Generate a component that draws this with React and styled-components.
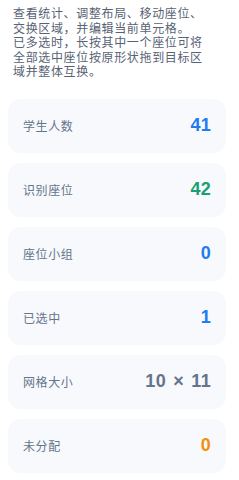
import React from 'react'
import styled, { createGlobalStyle } from 'styled-components'

const Global = createGlobalStyle`
    body{
        margin: 0;
        background: #ffffff;
        font-family: "Noto Sans CJK SC", "Noto Sans", sans-serif;
    }
`

const stats = [
    { label: '学生人数', value: '41', color: '#1d7cf2' },
    { label: '识别座位', value: '42', color: '#18a070' },
    { label: '座位小组', value: '0', color: '#1d7cf2' },
    { label: '已选中', value: '1', color: '#1d7cf2' },
    { label: '网格大小', value: '10 × 11', color: '#64748b' },
    { label: '未分配', value: '0', color: '#f0900c' },
]

function App() {
    return (
        <>
            <Global />
            <Panel>
                <Hint>
                    查看统计、调整布局、移动座位、交换区域，并编辑当前单元格。
                    <br />
                    已多选时，长按其中一个座位可将全部选中座位按原形状拖到目标区域并整体互换。
                </Hint>
                <List>
                    {stats.map((s) => (
                        <Card key={s.label}>
                            <Label>{s.label}</Label>
                            <Value $color={s.color}>{s.value}</Value>
                        </Card>
                    ))}
                </List>
            </Panel>
        </>
    )
}

export default App

const Panel = styled.div`
    padding: 6px 13px 0 8px;
    display: flex;
    flex-direction: column;
    gap: 20px;
`
const Hint = styled.p`
    margin: 0;
    padding-left: 5px;
    width: 198px;
    font-size: 12px;
    letter-spacing: 0.65px;
    line-height: 14.5px;
    color: #576274;
`
const List = styled.div`
    display: flex;
    flex-direction: column;
    gap: 10px;
`
const Card = styled.div`
    height: 54px;
    box-sizing: border-box;
    border-radius: 13px;
    background: #f7f9fc;
    display: flex;
    align-items: center;
    justify-content: space-between;
    padding: 0 15px 0 15px;
`
const Label = styled.span`
    font-size: 12px;
    letter-spacing: 0.6px;
    color: #64748b;
`
const Value = styled.span`
    font-family: "Liberation Sans", Arial, sans-serif;
    font-weight: 700;
    font-size: 18px;
    letter-spacing: 0.3px;
    word-spacing: 2px;
    color: ${(p) => p.$color};
`
